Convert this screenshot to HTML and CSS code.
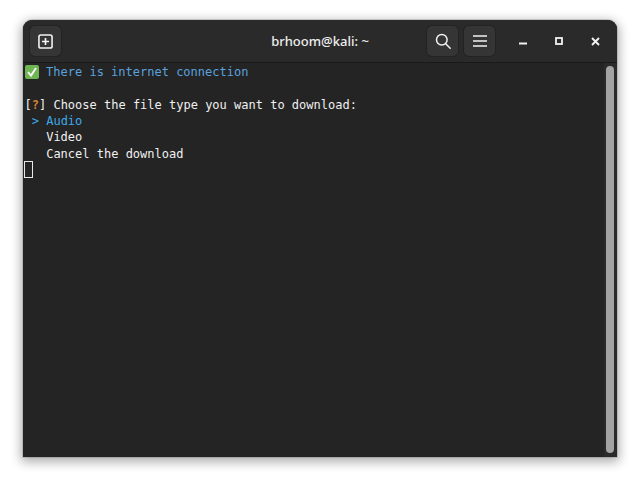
FILE: index.html
```html
<!DOCTYPE html>
<html lang="en">
<head>
<meta charset="utf-8">
<title>brhoom@kali: ~</title>
<link rel="stylesheet" href="styles.css">
</head>
<body>
<div class="window">
  <header class="headerbar">
    <div class="btn">
      <svg class="newtab" width="15" height="15" viewBox="0 0 16 16" fill="none" stroke="#f2f2f2"><rect x="1" y="1" width="14" height="14" rx="2" stroke-width="1.7"/><path d="M8 4.2v7.6M4.2 8h7.6" stroke-width="1.8"/></svg>
    </div>
    <div class="title">brhoom@kali: ~</div>
    <div class="btn">
      <svg width="16" height="16" viewBox="0 0 16 16" fill="none" stroke="#f2f2f2" stroke-width="1.5"><circle cx="6.8" cy="6.8" r="5.3"/><path d="M10.7 10.7l4.5 4.5" stroke-linecap="round"/></svg>
    </div>
    <div class="btn">
      <svg width="14" height="12" viewBox="0 0 14 12" fill="none" stroke="#f2f2f2" stroke-width="1.4"><path d="M0 1h14M0 6h14M0 11h14"/></svg>
    </div>
    <div class="winctl">
      <svg width="8" height="8" viewBox="0 0 8 8" fill="#f2f2f2"><rect x="0" y="5.5" width="8" height="2"/></svg>
    </div>
    <div class="winctl">
      <svg width="8" height="8" viewBox="0 0 8 8" fill="none" stroke="#f2f2f2" stroke-width="1.8"><rect x="1" y="1" width="6" height="6"/></svg>
    </div>
    <div class="winctl">
      <svg width="9" height="9" viewBox="0 0 9 9" fill="none" stroke="#f2f2f2" stroke-width="1.9"><path d="M1 1l7 7M8 1l-7 7"/></svg>
    </div>
  </header>
  <main class="terminal">
    <div class="output">
      <div class="line blue"><svg class="emoji" width="14" height="14" viewBox="0 0 14 14"><rect width="14" height="14" rx="2" fill="#6fb552"/><path d="M3 7.2l3 3.4L11 3" fill="none" stroke="#f4f4f4" stroke-width="2"/></svg>There is internet connection</div>
      <div class="line">&nbsp;</div>
      <div class="line">[<span class="orange">?</span>] Choose the file type you want to download:</div>
      <div class="line"> <span class="cyan">&gt; Audio</span></div>
      <div class="line">   Video</div>
      <div class="line">   Cancel the download</div>
      <div class="line"><span class="cursor"></span></div>
    </div>
    <div class="scrollbar"><div class="thumb"></div></div>
  </main>
</div>
</body>
</html>
```
FILE: styles.css
```css
html, body {
  margin: 0;
  height: 100%;
  background: #fff;
  overflow: hidden;
}
body {
  box-sizing: border-box;
  padding: 20px 23px 25px;
  display: flex;
}
.window {
  flex: 1;
  display: flex;
  flex-direction: column;
  background: #242424;
  border-radius: 9px 9px 0 0;
  box-shadow: 0 3px 11px 2px rgba(0, 0, 0, 0.32), 0 0 0 1px rgba(0, 0, 0, 0.12);
  overflow: hidden;
}
.headerbar {
  height: 43px;
  flex: none;
  box-sizing: border-box;
  display: flex;
  align-items: center;
  padding: 0 7px;
  gap: 6px;
  background: #2a2a2a;
  border-bottom: 1px solid #191919;
}
.btn {
  width: 31px;
  height: 30px;
  flex: none;
  display: flex;
  align-items: center;
  justify-content: center;
  background: #353535;
  border-radius: 5px;
  box-shadow: 0 0 0 1px #232323;
}
.newtab {
  margin-right: 1px;
}
.title {
  flex: 1;
  text-align: center;
  padding-left: 152px;
  font: 500 13px/1 "Noto Sans", sans-serif;
  color: #eeeeee;
}
.winctl {
  width: 30px;
  height: 30px;
  flex: none;
  display: flex;
  align-items: center;
  justify-content: center;
}
.btn + .winctl {
  margin-left: 7px;
}
.terminal {
  flex: 1;
  display: flex;
  min-height: 0;
}
.output {
  flex: 1;
  padding: 1px 0 0 1.5px;
  font: 12px/16.33px "DejaVu Sans Mono", monospace;
  color: #f0f0f0;
}
.line {
  height: 16.33px;
  white-space: pre;
}
.blue { color: #5aa2de; }
.cyan { color: #3fa9e8; }
.orange { color: #d8812f; font-weight: 700; }
.emoji {
  width: 14px;
  height: 14px;
  margin-right: 7.6px;
  vertical-align: -2.5px;
}
.cursor {
  display: block;
  box-sizing: border-box;
  width: 9px;
  height: 17px;
  margin: -1px 0 0 -0.5px;
  border: 1px solid #e8e8e8;
}
.scrollbar {
  width: 13px;
  flex: none;
  box-sizing: border-box;
  padding: 3px 3px 4px 2px;
  background: #2a2a2a;
  display: flex;
}
.thumb {
  flex: 1;
  background: #a3a3a3;
  border-radius: 4px;
}
```
